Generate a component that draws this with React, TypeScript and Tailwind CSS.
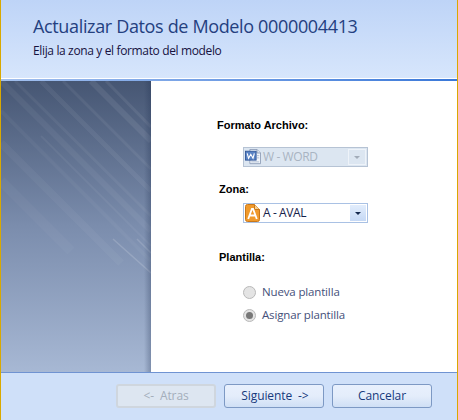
import React from "react";

const Streaks = () => (
  <svg className="absolute inset-0 w-full h-full" viewBox="0 0 150 291" preserveAspectRatio="none">
    <g stroke="#ffffff" fill="none">
      <path d="M0 0 L150 150" strokeOpacity="0.05" strokeWidth="6" />
      <path d="M14 0 L150 135" strokeOpacity="0.05" strokeWidth="3" />
      <path d="M40 0 L150 110" strokeOpacity="0.06" strokeWidth="5" />
      <path d="M62 0 L150 88" strokeOpacity="0.06" strokeWidth="3" />
      <path d="M90 0 L150 60" strokeOpacity="0.08" strokeWidth="6" />
      <path d="M105 0 L150 46" strokeOpacity="0.07" strokeWidth="3" />
      <path d="M0 30 L150 180" strokeOpacity="0.04" strokeWidth="4" />
      <path d="M0 62 L120 182" strokeOpacity="0.04" strokeWidth="8" />
      <path d="M40 55 L150 165" strokeOpacity="0.05" strokeWidth="2" />
      <path d="M112 158 L150 192" strokeOpacity="0.16" strokeWidth="1.5" />
      <path d="M136 158 L150 172" strokeOpacity="0.14" strokeWidth="1.5" />
      <path d="M0 100 L70 170" strokeOpacity="0.03" strokeWidth="10" />
    </g>
  </svg>
);

const WordIcon = () => (
  <svg width="16" height="16" viewBox="0 0 18 18" className="shrink-0">
    <path d="M5.5 0.5h8l4 4v12h-12z" fill="#f2f6fb" stroke="#8b9bb5" />
    <path d="M13.5 0.5v4h4" fill="#dbe5f2" stroke="#8b9bb5" />
    <path d="M13.5 7.5h2.5M13.5 10h2.5M7 14.5h9" stroke="#a9b8cf" fill="none" />
    <rect x="0.5" y="2.5" width="12" height="10" fill="#5a83c4" stroke="#2f5596" />
    <path d="M2.5 5l1.5 5.5 2.5-4.5 2.5 4.5 1.5-5.5" fill="none" stroke="#ffffff" strokeWidth="1.3" />
  </svg>
);

const AvalIcon = () => (
  <svg width="15" height="18" viewBox="0 0 15 18" className="shrink-0">
    <path d="M0.5 2.5q0-2 2-2h7l5 5v10q0 2-2 2h-10q-2 0-2-2z" fill="#f09a2c" stroke="#c9771a" />
    <path d="M9.5 0.5v5h5" fill="#f8cf8f" stroke="#c9771a" />
    <path d="M3.2 15l3.7-10h1.2l3.7 10M4.8 11.5h5.4" fill="none" stroke="#ffffff" strokeWidth="1.8" />
  </svg>
);

const Arrow = () => <span className="w-0 h-0 border-x-[3px] border-x-transparent border-t-[3px] border-t-current" />;

export default function App() {
  const font = "font-['Open_Sans','Noto_Sans',sans-serif]";
  return (
    <div className={`w-[458px] h-[420px] flex flex-col bg-white border-x border-x-[#d9a900] overflow-hidden ${font}`}>
      <div className="h-[78px] shrink-0 bg-gradient-to-b from-[#bed4f7] to-[#d7e6fc] pl-[32px] pt-[14px]">
        <h1 className="text-[18px] leading-[25px] tracking-[-0.35px] text-[#24407f] whitespace-nowrap">Actualizar Datos de Modelo 0000004413</h1>
        <p className="mt-[4px] text-[12px] leading-[16px] tracking-[-0.36px] text-[#16123f] whitespace-nowrap">Elija la zona y el formato del modelo</p>
      </div>
      <div className="h-[3px] shrink-0 border-t border-t-white bg-gradient-to-r from-[#a3c0ee] to-[#3a78d8]" />

      <div className="flex-1 flex min-h-0">
        <div className="relative w-[150px] shrink-0 bg-gradient-to-b from-[#465673] via-[#7b8dad] to-[#a7b8d4] overflow-hidden">
          <Streaks />
          <div className="absolute right-0 inset-y-0 w-[7px] bg-gradient-to-r from-transparent to-[#1e2f50]/30" />
        </div>

        <div className="flex-1 flex flex-col pl-[66px] pt-[37px]">
          <div className="font-['Liberation_Sans',sans-serif] font-bold text-[11px] leading-[14px] text-black">Formato Archivo:</div>
          <div className="mt-[15px] ml-[26px] w-[125px] h-[20px] flex items-center gap-[2px] pl-[1px] pr-[1px] bg-[#dce6f1] border border-[#b6c3d4] text-[#a9b4c2] text-[12px] tracking-[-0.4px]">
            <WordIcon />
            <span className="flex-1 whitespace-nowrap">W - WORD</span>
            <span className="w-[18px] h-[16px] flex items-center justify-center border border-[#eef3f9] text-[#a2acb9]"><Arrow /></span>
          </div>
          <div className="mt-[15px] ml-[2px] font-['Liberation_Sans',sans-serif] font-bold text-[11px] leading-[14px] text-black">Zona:</div>
          <div className="mt-[7px] ml-[26px] w-[125px] h-[20px] flex items-center gap-[3px] pl-[1px] pr-[1px] bg-white border border-[#a9c1e4] text-[#16224a] text-[12px] tracking-[-0.4px]">
            <AvalIcon />
            <span className="flex-1 whitespace-nowrap">A - AVAL</span>
            <span className="w-[16px] h-[16px] flex items-center justify-center bg-gradient-to-b from-[#e2edfc] to-[#c6d9f5] text-[#15294f]"><Arrow /></span>
          </div>
          <div className="mt-[27px] ml-[2px] font-['Liberation_Sans',sans-serif] font-bold text-[11px] leading-[14px] text-black">Plantilla:</div>
          <div className="mt-[20px] ml-[26px] flex flex-col gap-[7px] text-[11.5px] tracking-[-0.15px] text-[#45507a]">
            <label className="flex items-center gap-[6px] h-[16px]">
              <span className="w-[13px] h-[13px] rounded-full bg-[#e4e4e4] border border-[#b9b9b9]" />
              <span className="whitespace-nowrap">Nueva plantilla</span>
            </label>
            <label className="flex items-center gap-[6px] h-[16px]">
              <span className="w-[13px] h-[13px] rounded-full bg-[#e4e4e4] border border-[#b9b9b9] flex items-center justify-center">
                <span className="w-[7px] h-[7px] rounded-full bg-[#777777]" />
              </span>
              <span className="whitespace-nowrap">Asignar plantilla</span>
            </label>
          </div>
        </div>
      </div>

      <div className="h-[48px] shrink-0 bg-[#cfe0f9] border-t border-t-[#6f93d2] flex justify-end items-start gap-[8px] pt-[11px] pr-[25px] text-[12px] tracking-[-0.1px]">
        <button className="w-[100px] h-[24px] rounded-[3px] border-2 border-[#cfd6de] bg-[#dde6f1] text-[#a4aebb] whitespace-pre">
          {"<-  Atras"}
        </button>
        <button className="w-[100px] h-[24px] pl-[2px] rounded-[3px] border border-[#7d99c4] bg-gradient-to-b from-[#e8f0fd] via-[#e4edfb] to-[#cfdff5] text-[#173a7d] whitespace-pre">
          {"Siguiente  ->"}
        </button>
        <button className="w-[100px] h-[24px] rounded-[3px] border border-[#7d99c4] bg-gradient-to-b from-[#e8f0fd] via-[#e4edfb] to-[#cfdff5] text-[#173a7d]">
          Cancelar
        </button>
      </div>
    </div>
  );
}
